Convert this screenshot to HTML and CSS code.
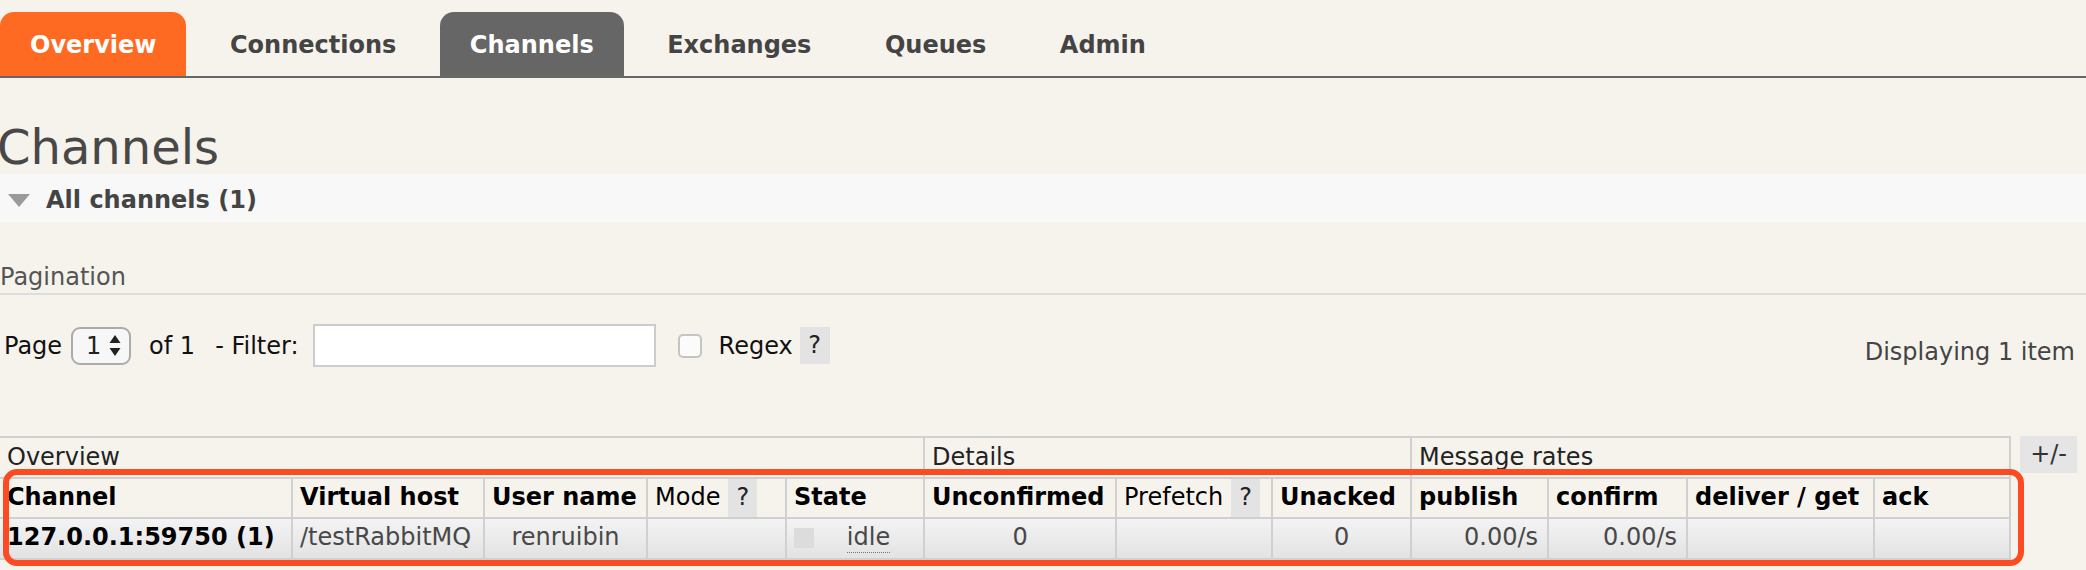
FILE: index.html
```html
<!DOCTYPE html>
<html>
<head>
<meta charset="utf-8">
<title>RabbitMQ Management - Channels</title>
<link rel="stylesheet" href="styles.css">
</head>
<body>
<ul class="tabs">
  <li class="tab tab-overview">Overview</li>
  <li class="tab">Connections</li>
  <li class="tab tab-active">Channels</li>
  <li class="tab">Exchanges</li>
  <li class="tab">Queues</li>
  <li class="tab">Admin</li>
</ul>

<h1 class="title">Channels</h1>

<div class="section-head"><span class="tri"></span><span>All channels (1)</span></div>

<h3 class="pag-title">Pagination</h3>

<div class="pager">
  <span class="lbl">Page</span>
  <span class="select"><span class="sel-val">1</span><svg class="arrows" width="12" height="22" viewBox="0 0 12 22"><path d="M6 0 L11.5 8 H0.5 Z M0.5 13 H11.5 L6 21 Z" fill="#222"/></svg></span>
  <span class="of">of 1</span>
  <span class="filter-lbl">- Filter:</span>
  <input class="filter" type="text">
  <span class="checkbox"></span>
  <span class="regex">Regex</span>
  <span class="help-box">?</span>
  <span class="displaying">Displaying 1 item</span>
</div>

<div class="table-area">
  <table class="list">
    <colgroup>
      <col class="c-chan"><col class="c-vhost"><col class="c-user"><col class="c-mode"><col class="c-state"><col class="c-unconf"><col class="c-prefetch"><col class="c-unacked"><col class="c-pub"><col class="c-conf"><col class="c-deliver"><col class="c-ack">
    </colgroup>
    <thead>
      <tr class="group-row">
        <th colspan="5" class="first">Overview</th>
        <th colspan="3">Details</th>
        <th colspan="4" class="last">Message rates</th>
      </tr>
      <tr class="head-row">
        <th class="first">Channel</th>
        <th>Virtual host</th>
        <th>User name</th>
        <th class="norm">Mode<span class="q">?</span></th>
        <th>State</th>
        <th>Unconfirmed</th>
        <th class="norm">Prefetch<span class="q">?</span></th>
        <th>Unacked</th>
        <th>publish</th>
        <th>confirm</th>
        <th>deliver / get</th>
        <th class="last">ack</th>
      </tr>
    </thead>
    <tbody>
      <tr class="data-row">
        <td class="first strong">127.0.0.1:59750 (1)</td>
        <td>/testRabbitMQ</td>
        <td class="center">renruibin</td>
        <td></td>
        <td class="state"><div class="state-in"><span class="sq"></span><span class="state-txt"><span class="idle">idle</span></span></div></td>
        <td class="center">0</td>
        <td></td>
        <td class="center">0</td>
        <td class="right">0.00/s</td>
        <td class="right">0.00/s</td>
        <td></td>
        <td class="last"></td>
      </tr>
    </tbody>
  </table>
  <span class="toggle">+/-</span>
  <div class="highlight"></div>
</div>
</body>
</html>
```

FILE: styles.css
```css
* { box-sizing: border-box; }
html, body { margin: 0; padding: 0; }
body {
  background: #f6f3ed;
  font-family: "DejaVu Sans", Verdana, sans-serif;
  font-size: 24px;
  color: #111;
  padding-top: 12px;
  width: 2086px;
  height: 570px;
  overflow: hidden;
}

/* tabs */
.tabs {
  list-style: none;
  margin: 0;
  padding: 0;
  display: flex;
  gap: 13.5px;
  height: 66px;
  border-bottom: 2px solid #666;
}
.tab {
  height: 64px;
  padding: 2px 30px 0;
  display: flex;
  align-items: center;
  font-size: 24px;
  font-weight: bold;
  color: #444;
  border-radius: 14px 14px 0 0;
}
.tab-overview { background: #ff6a22; color: #fff; }
.tab-active { background: #666; color: #fff; }

/* title */
.title {
  margin: 45px 0 3px -3px;
  font-size: 48px;
  line-height: 48px;
  font-weight: normal;
  color: #484848;
}

.section-head {
  display: flex;
  align-items: center;
  height: 48px;
  padding-top: 4px;
  background: #f8f8f8;
  font-size: 24px;
  font-weight: bold;
  color: #444;
}
.tri {
  width: 0;
  height: 0;
  border-left: 11px solid transparent;
  border-right: 11px solid transparent;
  border-top: 13px solid #9a9a9a;
  margin: 0 16px 0 8px;
}

.pag-title {
  margin: 41px 0 0;
  padding-bottom: 2px;
  border-bottom: 2px solid #dddddd;
  font-size: 24px;
  line-height: 28px;
  font-weight: normal;
  color: #555;
}

/* pager */
.pager {
  display: flex;
  align-items: center;
  height: 43px;
  margin-top: 29px;
  color: #111;
}
.lbl { padding-left: 4px; }
.select {
  display: flex;
  align-items: center;
  width: 60px;
  height: 38px;
  margin-left: 9px;
  padding-left: 13px;
  border: 2px solid #ababab;
  border-radius: 9px;
  background: #f7f7f7;
  color: #222;
}
.arrows { margin-left: 8px; display: block; }
.of { margin-left: 18px; }
.filter-lbl { margin-left: 20px; }
.filter {
  margin: 0 0 0 14px;
  width: 343px;
  height: 43px;
  border: 2px solid #cccccc;
  background: #fff;
  padding: 0;
}
.checkbox {
  margin-left: 22px;
  width: 24px;
  height: 24px;
  border: 2px solid #c4c4c4;
  border-radius: 5px;
  background: #fbfbfb;
}
.regex { margin-left: 17px; }
.help-box {
  margin-left: 7px;
  width: 30px;
  height: 37px;
  line-height: 37px;
  text-align: center;
  background: #e3e3e3;
  color: #222;
}
.displaying {
  margin-left: auto;
  margin-right: 11px;
  align-self: flex-end;
  margin-bottom: 1px;
  color: #444;
}

/* table */
.table-area {
  position: relative;
  display: flex;
  align-items: flex-start;
  gap: 9px;
  margin-top: 69px;
}
.list {
  table-layout: fixed;
  width: 2011px;
  border-collapse: separate;
  border-spacing: 0;
  flex: none;
}
.c-chan { width: 291px; }
.c-vhost { width: 192px; }
.c-user { width: 163px; }
.c-mode { width: 139px; }
.c-state { width: 138px; }
.c-unconf { width: 192px; }
.c-prefetch { width: 156px; }
.c-unacked { width: 139px; }
.c-pub { width: 137px; }
.c-conf { width: 139px; }
.c-deliver { width: 187px; }
.c-ack { width: 138px; }

.list th, .list td {
  border-top: 2px solid #d0d0d0;
  border-left: 2px solid #d0d0d0;
  padding: 5px 3px 6px 7px;
  line-height: 27px;
  text-align: left;
  white-space: nowrap;
}
.list .first { border-left: none; }
.list .last { border-right: 2px solid #d0d0d0; }

.group-row th {
  font-weight: normal;
  color: #222;
  padding: 6px 7px;
}
.head-row th {
  font-weight: bold;
  color: #000;
}
.head-row th.norm { font-weight: normal; }
.q {
  display: inline-block;
  width: 29px;
  margin: -5px 0 -6px 8px;
  padding: 5px 0 6px;
  background: #e3e3e3;
  text-align: center;
  font-weight: normal;
  color: #222;
}

.data-row td {
  background: linear-gradient(#f3f3f3, #e3e3e3);
  color: #484848;
  padding: 5px 7px 7px;
  border-bottom: 2px solid #d0d0d0;
}
.data-row td.strong { font-weight: bold; color: #000; }
.data-row td.center { text-align: center; }
.data-row td.right { text-align: right; padding-right: 9px; }
.data-row td.state { padding-right: 0; }
.state-in { display: flex; align-items: center; }
.sq { width: 20px; height: 20px; background: #dcdcdc; flex: none; }
.state-txt { flex: 1; text-align: center; }
.idle { border-bottom: 1px dotted #777; padding-bottom: 1px; }

.toggle {
  width: 57px;
  height: 37px;
  line-height: 37px;
  text-align: center;
  background: #e5e5e5;
  color: #333;
  flex: none;
}

.highlight {
  position: absolute;
  left: 3px;
  top: 33px;
  width: 2021px;
  height: 97px;
  border: 6px solid #fc4a22;
  border-radius: 14px;
  pointer-events: none;
}
```
